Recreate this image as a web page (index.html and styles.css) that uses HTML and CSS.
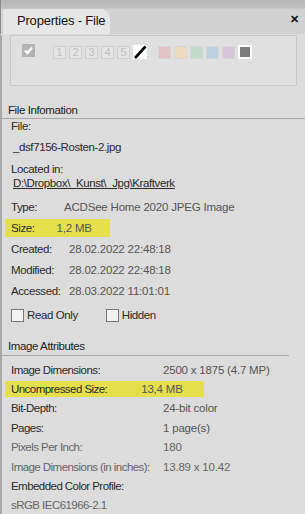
FILE: index.html
```html
<!DOCTYPE html>
<html lang="en">
<head>
    <meta charset="UTF-8">
    <meta name="viewport" content="width=device-width, initial-scale=1.0">
    <title>Properties - File</title>
    <link rel="stylesheet" href="styles.css">
</head>
<body>

    <div class="panel">
        <div class="tab-bar">
            <div class="tab">Properties - File</div>
            <div class="close">&#x2715;</div>
        </div>

        <div class="panel-body">
            <div class="tag-box">
                <span class="tagged">
                    <svg width="13" height="13" viewBox="0 0 13 13"><rect width="13" height="13" fill="#b4b4b4"/><path d="M3 6.5 L5.5 9 L10 3.5" stroke="#fff" stroke-width="2.2" fill="none"/></svg>
                </span>
                <span class="ratings">
                    <span class="rate">1</span>
                    <span class="rate">2</span>
                    <span class="rate">3</span>
                    <span class="rate">4</span>
                    <span class="rate">5</span>
                    <span class="rate rate-clear">
                        <svg width="14" height="14" viewBox="0 0 14 14"><path d="M2 13 L12.5 1.5" stroke="#000" stroke-width="2.6"/></svg>
                    </span>
                </span>
                <span class="labels">
                    <span class="swatch red"></span>
                    <span class="swatch yellow"></span>
                    <span class="swatch green"></span>
                    <span class="swatch blue"></span>
                    <span class="swatch purple"></span>
                    <span class="swatch none"></span>
                </span>
            </div>

            <div class="section-head">File Infomation</div>
            <div class="file-info">
                <div class="line">File:</div>
                <div class="line indent file-name">_dsf7156-Rosten-2.jpg</div>
                <div class="line located">Located in:</div>
                <div class="line indent path">D:\Dropbox\_Kunst\_Jpg\Kraftverk</div>
                <div class="row type-row"><span class="label">Type:</span><span class="value type-value">ACDSee Home 2020 JPEG Image</span></div>
                <div class="row"><span class="label mark">Size:<span class="value">1,2 MB</span></span></div>
                <div class="row"><span class="label">Created:</span><span class="value">28.02.2022 22:48:18</span></div>
                <div class="row"><span class="label">Modified:</span><span class="value">28.02.2022 22:48:18</span></div>
                <div class="row"><span class="label">Accessed:</span><span class="value">28.03.2022 11:01:01</span></div>
                <div class="checks">
                    <label class="check"><span class="box"></span>Read Only</label>
                    <label class="check"><span class="box"></span>Hidden</label>
                </div>
            </div>

            <div class="section-head attr-head">Image Attributes</div>
            <div class="attributes">
                <div class="attr"><span class="name">Image Dimensions:</span><span class="val">2500 x 1875 (4.7 MP)</span></div>
                <div class="attr"><span class="name mark">Uncompressed Size:<span class="val">13,4 MB</span></span></div>
                <div class="attr"><span class="name">Bit-Depth:</span><span class="val">24-bit color</span></div>
                <div class="attr"><span class="name">Pages:</span><span class="val">1 page(s)</span></div>
                <div class="attr dim"><span class="name">Pixels Per Inch:</span><span class="val">180</span></div>
                <div class="attr dim"><span class="name">Image Dimensions (in inches):</span><span class="val">13.89 x 10.42</span></div>
                <div class="attr"><span class="name">Embedded Color Profile:</span></div>
                <div class="attr dim"><span class="name">sRGB IEC61966-2.1</span></div>
            </div>
        </div>
    </div>

</body>
</html>
```

FILE: styles.css
```css
body {
    margin: 0;
    font-family: "Liberation Sans", Arial, sans-serif;
    font-size: 11.5px;
    color: #2a2a2a;
    background-color: #dcdcdc;
}

.panel {
    width: 305px;
    height: 514px;
    overflow: hidden;
    background-color: #dcdcdc;
}

.tab-bar {
    height: 34px;
    display: flex;
    align-items: flex-end;
    justify-content: space-between;
    background: linear-gradient(#b6b6b6 0, #bebebe 8px, #d1d1d1 9px, #d1d1d1 100%);
    border-left: 1px solid #8c8c8c;
}

.tab {
    margin-left: 2px;
    width: 107px;
    height: 25px;
    box-sizing: border-box;
    padding: 4px 0 0 14px;
    background-color: #e6e6e6;
    border-radius: 3px 9px 0 0;
    font-size: 13px;
    color: #111;
    letter-spacing: -0.2px;
}

.close {
    align-self: center;
    margin: 4px 6px 0 0;
    font-size: 11px;
    font-weight: bold;
    color: #111;
}

.panel-body {
    border-left: 2px solid #a8a8a8;
    padding-bottom: 20px;
}

.tag-box {
    margin: 1px 8px 0 8px;
    height: 51px;
    box-sizing: border-box;
    border: 1px solid #c8c8c8;
    background-color: #e0e0e0;
    display: flex;
    align-items: flex-start;
    padding: 8px 0 0 11px;
}

.tagged {
    display: flex;
    margin-right: 18px;
}

.ratings, .labels {
    display: flex;
    gap: 3px;
    margin-top: 2px;
}

.rate {
    width: 13px;
    height: 13px;
    box-sizing: border-box;
    border: 1px solid #cfcfcf;
    background-color: #e4e4e4;
    color: #bdbdbd;
    font-size: 11px;
    line-height: 11px;
    text-align: center;
}

.rate-clear {
    width: 14px;
    height: 14px;
    margin-top: -1px;
    border: none;
    background-color: #fff;
    display: flex;
}

.labels {
    margin-left: 11px;
}

.swatch {
    width: 13px;
    height: 13px;
    box-sizing: border-box;
    border: 1px solid #d6d6d6;
}

.red { background-color: #e2c2c6; }
.yellow { background-color: #ecdcbf; }
.green { background-color: #c0dbc9; }
.blue { background-color: #bdd0e2; }
.purple { background-color: #d7c5d9; }

.none {
    background-color: #7b7b7b;
    border: 2px solid #fff;
    width: 14px;
    height: 14px;
    margin-top: -1px;
}

.section-head {
    margin-top: 17px;
    line-height: 14px;
    padding: 0 0 1px 6px;
    border-bottom: 1px solid #a9a9a9;
    color: #222;
    letter-spacing: -0.4px;
}

.file-info {
    padding-left: 9px;
    letter-spacing: -0.4px;
}

.line {
    line-height: 14px;
}

.indent {
    padding-left: 2px;
}

.file-name {
    margin-top: 7px;
}

.located {
    margin-top: 8px;
}

.path {
    text-decoration: underline;
}

.row {
    display: flex;
    height: 21px;
    align-items: center;
}

.type-row {
    margin-top: 6px;
}

.label {
    width: 58px;
    flex-shrink: 0;
}

.value {
    color: #555;
    letter-spacing: -0.2px;
}

.type-value {
    margin-left: -5px;
}

.label.mark {
    display: flex;
    width: 93px;
    margin-left: -6px;
    padding: 3px 6px;
    background-color: #e6df4c;
}

.label.mark .value {
    margin-left: 22px;
}

.checks {
    display: flex;
    gap: 28px;
    height: 20px;
    align-items: center;
    margin-top: 4px;
}

.check {
    display: flex;
    align-items: center;
    gap: 3px;
}

.box {
    width: 11px;
    height: 11px;
    border: 1px solid #777;
    background-color: #f2f2f2;
}

.attr-head {
    margin-top: 14px;
    margin-right: 16px;
    padding-bottom: 2px;
}

.attributes {
    padding: 4px 0 0 9px;
    letter-spacing: -0.55px;
}

.attr {
    display: flex;
    height: 19.4px;
    align-items: center;
}

.name {
    width: 152px;
    flex-shrink: 0;
}

.val {
    color: #555;
    letter-spacing: -0.2px;
}

.dim .name, .dim .val {
    color: #666;
}

.name.mark {
    display: flex;
    width: 185px;
    margin-left: -6px;
    padding: 2px 8px 2px 6px;
    background-color: #e6df4c;
}

.name.mark .val {
    margin-left: 34px;
}
```
